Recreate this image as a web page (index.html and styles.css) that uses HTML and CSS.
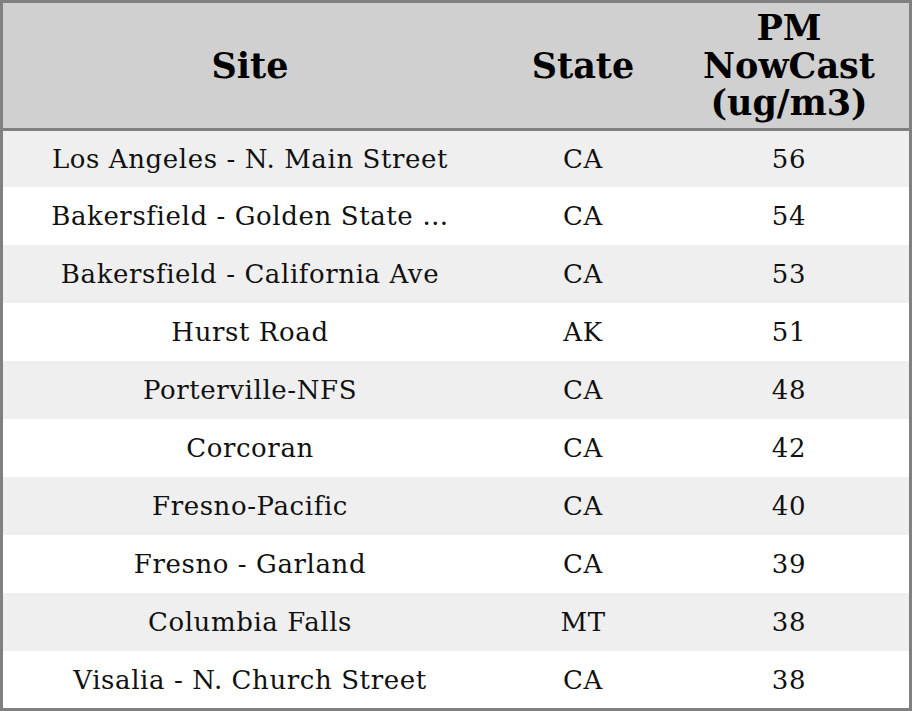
FILE: index.html
```html
<!DOCTYPE html>
<html>
<head>
<meta charset="utf-8">
<link rel="stylesheet" href="styles.css">
</head>
<body>
<div class="table">
  <div class="head">
    <div class="hcell">Site</div>
    <div class="hcell">State</div>
    <div class="hcell">PM<br>NowCast<br>(ug/m3)</div>
  </div>
  <div class="body">
    <div class="row odd"><div>Los Angeles - N. Main Street</div><div>CA</div><div>56</div></div>
    <div class="row"><div>Bakersfield - Golden State …</div><div>CA</div><div>54</div></div>
    <div class="row odd"><div>Bakersfield - California Ave</div><div>CA</div><div>53</div></div>
    <div class="row"><div>Hurst Road</div><div>AK</div><div>51</div></div>
    <div class="row odd"><div>Porterville-NFS</div><div>CA</div><div>48</div></div>
    <div class="row"><div>Corcoran</div><div>CA</div><div>42</div></div>
    <div class="row odd"><div>Fresno-Pacific</div><div>CA</div><div>40</div></div>
    <div class="row"><div>Fresno - Garland</div><div>CA</div><div>39</div></div>
    <div class="row odd"><div>Columbia Falls</div><div>MT</div><div>38</div></div>
    <div class="row"><div>Visalia - N. Church Street</div><div>CA</div><div>38</div></div>
  </div>
</div>
</body>
</html>
```
FILE: styles.css
```css
html, body {
  margin: 0;
  padding: 0;
  background: #ffffff;
}
.table {
  width: 912px;
  height: 711px;
  box-sizing: border-box;
  border: 3px solid #808080;
  font-family: "DejaVu Serif", serif;
  color: #111;
  display: flex;
  flex-direction: column;
}
.head {
  height: 125px;
  background: #d0d0d0;
  border-bottom: 3px solid #808080;
  display: grid;
  grid-template-columns: 494px 172px 240px;
  align-items: center;
  text-align: center;
  font-weight: bold;
  font-size: 35px;
  line-height: 37.5px;
  color: #000;
}
.body {
  display: grid;
  grid-template-rows: 56px repeat(8, 58px) 57px;
}
.row {
  display: grid;
  grid-template-columns: 494px 172px 240px;
  align-items: center;
  text-align: center;
  font-size: 26px;
  letter-spacing: 0.6px;
  background: #ffffff;
}
.row.odd {
  background: #efefef;
}
```
